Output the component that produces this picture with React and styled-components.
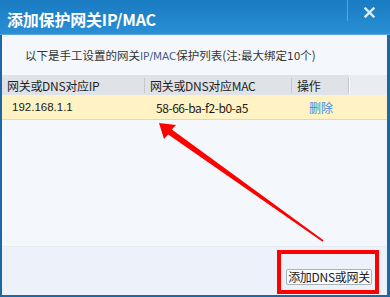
import React from 'react';
import styled, { createGlobalStyle } from 'styled-components';

const GlobalStyle = createGlobalStyle`
  html, body {
    margin: 0;
    padding: 0;
    background: #f4f8fc;
  }
  body {
    font-family: "Liberation Sans", "Noto Sans CJK SC", sans-serif;
  }
`;

const Dialog = styled.div`
  position: relative;
  width: 390px;
  height: 297px;
  display: flex;
  flex-direction: column;
  overflow: hidden;
`;

const TitleBar = styled.div`
  height: 35px;
  flex: none;
  display: flex;
  align-items: flex-start;
  background: linear-gradient(180deg, #1a7cc2 0%, #2287cd 60%, #2a8fd4 100%);
  border-bottom: 1px solid #5aa6dc;
  box-sizing: border-box;
`;

const Title = styled.div`
  flex: 1;
  padding: 10px 0 0 7px;
  color: #ffffff;
  font-family: "Noto Sans CJK SC", sans-serif;
  font-size: 16px;
  font-weight: 700;
  line-height: 19px;
  letter-spacing: -0.2px;
`;

const Controls = styled.div`
  width: 43px;
  height: 21px;
  border-left: 1px solid rgba(255, 255, 255, 0.28);
  display: flex;
  align-items: center;
  justify-content: center;
  padding-top: 3px;
  box-sizing: border-box;
`;

const Body = styled.div`
  flex: 1;
  display: flex;
  flex-direction: column;
  border-left: 2px solid #1b68a2;
  border-right: 3px solid #1b68a2;
  border-bottom: 2px solid #1b68a2;
  background: #f4f8fc;
`;

const Content = styled.div`
  flex: 1;
`;

const Note = styled.div`
  margin: 12px 0 11px 23px;
  font-family: "Noto Sans CJK SC", sans-serif;
  font-size: 11.5px;
  line-height: 16px;
  color: #333333;
`;

const Latin = styled.span`
  font-family: "DejaVu Sans", sans-serif;
  font-size: 10.5px;
  color: ${p => p.$muted ? '#4a5a8a' : 'inherit'};
`;

const Row = styled.div`
  display: grid;
  grid-template-columns: 143px 147px 57px 1fr;
  height: ${p => p.$head ? '20px' : '24px'};
  background: ${p => p.$head ? '#e9edf1' : '#fff2c4'};
  border-bottom: ${p => p.$head ? 'none' : '1px solid #ecd8a2'};
  font-family: "Noto Sans CJK SC", sans-serif;
  font-size: 12px;
`;

const HeadCell = styled.div`
  position: relative;
  display: flex;
  align-items: center;
  padding-left: 5px;
  background: #dfe3e8;
  color: #1e1e1e;
  letter-spacing: -0.3px;

  &::after {
    content: '';
    position: absolute;
    right: 0;
    top: 3px;
    bottom: 2px;
    width: 1px;
    background: #c4c9cf;
    box-shadow: 1px 0 0 #ffffff;
  }
`;

const Cell = styled.div`
  display: flex;
  align-items: center;
  padding-left: ${p => p.$pad || 10}px;
  color: ${p => p.$link ? '#3a8ee6' : '#1a1a1a'};
  font-family: ${p => p.$ip ? '"Liberation Sans", "Noto Sans CJK SC", sans-serif' : '"Noto Sans CJK SC", sans-serif'};
  font-size: ${p => p.$ip ? '11.5px' : '12px'};
  letter-spacing: ${p => p.$ip || p.$link ? '0' : '-0.45px'};
`;

const Footer = styled.div`
  height: 49px;
  flex: none;
  display: flex;
  justify-content: flex-end;
  align-items: flex-start;
  padding: 3px 8px 0 0;
  box-sizing: border-box;
  background: #edf2fa;
  border-top: 1px solid #e6ecf4;
`;

const RedFrame = styled.div`
  width: 102px;
  height: 44px;
  box-sizing: border-box;
  border: 4px solid #ff0000;
  display: flex;
  align-items: flex-end;
  padding: 0 3px 5px 5px;
`;

const ActionButton = styled.button`
  width: 86px;
  height: 16px;
  padding: 0;
  margin: 0;
  background: #fbfcfd;
  border: 1px solid #a7b1bc;
  border-radius: 2px;
  color: #222222;
  font-family: "Noto Sans CJK SC", sans-serif;
  font-size: 12px;
  line-height: 14px;
  letter-spacing: -0.3px;
  white-space: nowrap;
  cursor: pointer;
`;

const ArrowLayer = styled.svg`
  position: absolute;
  left: 0;
  top: 0;
  pointer-events: none;
`;

const columns = ['网关或DNS对应IP', '网关或DNS对应MAC', '操作'];

export default function App() {
  return (
    <>
      <GlobalStyle />
      <Dialog>
        <TitleBar>
          <Title>添加保护网关IP/MAC</Title>
          <Controls>
            <svg width="11" height="11" viewBox="0 0 11 11">
              <path d="M1.5 1.5 L9.5 9.5 M9.5 1.5 L1.5 9.5" stroke="#d6ebf8" strokeWidth="2.4" strokeLinecap="square" />
            </svg>
          </Controls>
        </TitleBar>
        <Body>
          <Content>
            <Note>
              以下是手工设置的网关<Latin $muted>IP/MAC</Latin>保护列表(注:最大绑定<Latin>10</Latin>个)
            </Note>
            <Row $head>
              {columns.map(c => (
                <HeadCell key={c}>{c}</HeadCell>
              ))}
              <div />
            </Row>
            <Row>
              <Cell $ip>192.168.1.1</Cell>
              <Cell $pad={11}>58-66-ba-f2-b0-a5</Cell>
              <Cell $pad={17} $link>删除</Cell>
              <div />
            </Row>
          </Content>
          <Footer>
            <RedFrame>
              <ActionButton>添加DNS或网关</ActionButton>
            </RedFrame>
          </Footer>
        </Body>
        <ArrowLayer width="390" height="297" viewBox="0 0 390 297">
          <polygon
            points="159,123 176,125 171.8,129.6 323.5,240.3 322.5,241.7 168.2,134.4 164,139"
            fill="#ff0000"
          />
        </ArrowLayer>
      </Dialog>
    </>
  );
}
